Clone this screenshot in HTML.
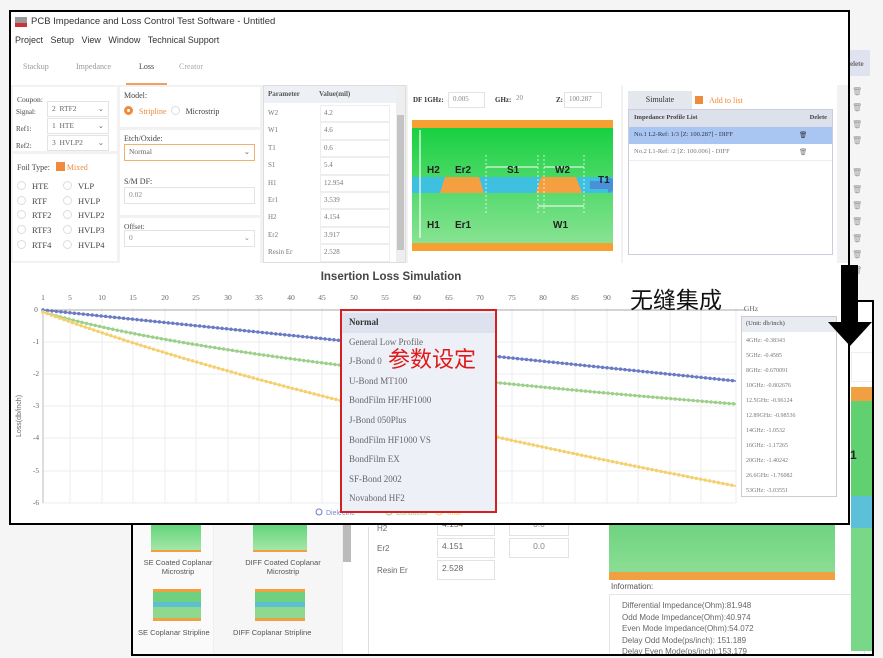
<!DOCTYPE html>
<html><head><meta charset="utf-8"><style>
*{margin:0;padding:0;box-sizing:border-box}
body{width:883px;height:658px;background:#f5f5f5;position:relative;overflow:hidden;font-family:"Liberation Serif",serif;color:#555}
.a{position:absolute}
.s{font-family:"Liberation Sans",sans-serif}
.p{background:#fff}
.in{position:absolute;background:#fff;border:1px solid #e3e3e3;font-size:7.5px;color:#888;padding:2px 4px}
.rad{display:inline-block;width:9px;height:9px;border:1px solid #ddd;border-radius:50%;vertical-align:-1px;margin-right:6px}
.t{font-size:8px;color:#666}
.cell{border:1px solid #eee;padding-left:3px;height:17.4px;line-height:15.4px}
</style></head><body>
<div class="a" style="left:850px;top:50px;width:20px;height:26px;background:#dfe3ef"></div>
<div class="a t" style="left:850px;top:60px;font-size:7px;font-weight:bold">elete</div>
<div class="a" style="left:852px;top:84px;width:10px;font-size:8px;line-height:16.3px;color:#999">🗑<br>🗑<br>🗑<br>🗑<br><br>🗑<br>🗑<br>🗑<br>🗑<br>🗑<br>🗑<br>🗑</div>

<div class="a" style="left:131px;top:300px;width:743px;height:356px;border:2px solid #000;background:#fff;overflow:hidden">
 <div class="a" style="left:0;top:0;width:80px;height:360px;background:#fafafa"></div>
 <div class="a" style="left:80px;top:0;width:130px;height:360px;background:#f6f6f6;border-left:1px solid #eee;border-right:1px solid #eee"></div>
 <div class="a" style="left:210px;top:210px;width:8px;height:50px;background:#bbb"></div>
 <div class="a" style="left:18px;top:215px;width:50px;height:35px;background:linear-gradient(#4fd06a,#a4e6a8);border-bottom:2px solid #f0a040"></div>
 <div class="a" style="left:120px;top:215px;width:54px;height:35px;background:linear-gradient(#4fd06a,#a4e6a8);border-bottom:2px solid #f0a040"></div>
 <div class="a s" style="left:5px;top:256px;width:80px;text-align:center;font-size:7.5px;color:#555">SE Coated Coplanar Microstrip</div>
 <div class="a s" style="left:100px;top:256px;width:100px;text-align:center;font-size:7.5px;color:#555">DIFF Coated Coplanar Microstrip</div>
 <div class="a" style="left:20px;top:287px;width:48px;height:32px;background:linear-gradient(#f0a040 0 3px,#6fd080 3px,#6fd080 13px,#5bc0d0 13px,#5bc0d0 18px,#8ed890 18px,#8ed890 29px,#f0a040 29px)"></div>
 <div class="a" style="left:122px;top:287px;width:50px;height:32px;background:linear-gradient(#f0a040 0 3px,#6fd080 3px,#6fd080 13px,#5bc0d0 13px,#5bc0d0 18px,#8ed890 18px,#8ed890 29px,#f0a040 29px)"></div>
 <div class="a s" style="left:5px;top:326px;font-size:7.5px">SE Coplanar Stripline</div>
 <div class="a s" style="left:100px;top:326px;font-size:7.5px">DIFF Coplanar Stripline</div>
 <div class="a" style="left:235px;top:225px;width:240px;height:135px;border-left:1px solid #ddd"></div>
 <div class="a s" style="left:244px;top:222px;font-size:8px;color:#666">H2</div>
 <div class="a s" style="left:244px;top:242px;font-size:8px;color:#666">Er2</div>
 <div class="a s" style="left:244px;top:264px;font-size:8px;color:#666">Resin Er</div>
 <div class="in s" style="left:304px;top:214px;width:58px;height:20px;font-size:8.5px;color:#666">4.154</div>
 <div class="in s" style="left:304px;top:236px;width:58px;height:20px;font-size:8.5px;color:#666">4.151</div>
 <div class="in s" style="left:304px;top:258px;width:58px;height:20px;font-size:8.5px;color:#666">2.528</div>
 <div class="in s" style="left:376px;top:214px;width:60px;height:20px;font-size:8.5px;color:#888;text-align:center">0.0</div>
 <div class="in s" style="left:376px;top:236px;width:60px;height:20px;font-size:8.5px;color:#888;text-align:center">0.0</div>
 <div class="a" style="left:476px;top:220px;width:226px;height:78px;background:linear-gradient(#6dd37e,#9be3a0)"></div>
 <div class="a" style="left:476px;top:270px;width:226px;height:8px;background:#f0a040"></div>
 <div class="a" style="left:476px;top:278px;width:226px;height:80px;background:#fff"></div>
 <div class="a s" style="left:478px;top:280px;font-size:8px;color:#555">Information:</div>
 <div class="a s" style="left:476px;top:292px;width:256px;height:70px;border:1px solid #e5e5e5;padding:5px 12px;font-size:8px;line-height:11.6px;color:#666">Differential Impedance(Ohm):81.948<br>Odd Mode Impedance(Ohm):40.974<br>Even Mode Impedance(Ohm):54.072<br>Delay Odd Mode(ps/inch): 151.189<br>Delay Even Mode(ps/inch):153.179</div>
 <div class="a" style="left:718px;top:50px;width:30px;height:30px;border:1px solid #eee"></div>
 <div class="a" style="left:718px;top:85px;width:30px;height:14px;background:#f0a040"></div>
 <div class="a" style="left:718px;top:99px;width:30px;height:250px;background:linear-gradient(#60d070 0 95px,#5bc0d8 95px,#5bc0d8 127px,#78d888 127px)"></div>
 <div class="a s" style="left:717px;top:146px;font-size:12px;font-weight:bold;color:#222">1</div>
</div>

<div class="a" style="left:9px;top:10px;width:841px;height:515px;border:2px solid #000;background:#fff;overflow:hidden">
 <div class="a" style="left:4px;top:5px;width:12px;height:10px;background:linear-gradient(#999 60%,#c33 60%)"></div>
 <div class="a s" style="left:20px;top:4px;font-size:9.5px;color:#333">PCB Impedance and Loss Control Test Software - Untitled</div>
 <div class="a s" style="left:4px;top:23px;font-size:9px;color:#333">Project&nbsp;&nbsp; Setup&nbsp;&nbsp; View&nbsp;&nbsp; Window&nbsp;&nbsp; Technical Support</div>
 <div class="a" style="left:12px;top:50px;font-size:8px;color:#999">Stackup</div>
 <div class="a" style="left:65px;top:50px;font-size:8px;color:#999">Impedance</div>
 <div class="a" style="left:128px;top:50px;font-size:8px;color:#444">Loss</div>
 <div class="a" style="left:168px;top:50px;font-size:8px;color:#aaa">Creator</div>
 <div class="a" style="left:115px;top:71px;width:41px;height:2px;background:#f0a060"></div>
 <div class="a" style="left:0;top:73px;width:841px;height:178px;background:#f2f2f2"></div>
 <div class="a p" style="left:2px;top:75px;width:104px;height:64px;font-size:7.5px;color:#444;padding:5px 4px;line-height:16.5px">Coupon:<br></div>
 <div class="a" style="left:5px;top:92px;font-size:7px;color:#444;line-height:17px">Signal:<br>Ref1:<br>Ref2:</div>
 <div class="in" style="left:36px;top:89px;width:62px;height:16px;color:#666">2&nbsp; RTF2 <span style="float:right">⌄</span></div>
 <div class="in" style="left:36px;top:106px;width:62px;height:16px;color:#666">1&nbsp; HTE <span style="float:right">⌄</span></div>
 <div class="in" style="left:36px;top:123px;width:62px;height:16px;color:#666">3&nbsp; HVLP2 <span style="float:right">⌄</span></div>
 <div class="a p" style="left:2px;top:142px;width:104px;height:107px"></div>
 <div class="a" style="left:6px;top:150px;font-size:8px;color:#444">Foil Type: <span style="display:inline-block;width:9px;height:9px;background:#f08a3c;vertical-align:-1px;margin-left:4px"></span> <span style="color:#f08a3c">Mixed</span></div>
 <div class="a" style="left:6px;top:167px;font-size:8.5px;color:#444;line-height:14.7px"><span class="rad"></span>HTE<br><span class="rad"></span>RTF<br><span class="rad"></span>RTF2<br><span class="rad"></span>RTF3<br><span class="rad"></span>RTF4</div>
 <div class="a" style="left:52px;top:167px;font-size:8.5px;color:#444;line-height:14.7px"><span class="rad"></span>VLP<br><span class="rad"></span>HVLP<br><span class="rad"></span>HVLP2<br><span class="rad"></span>HVLP3<br><span class="rad"></span>HVLP4</div>
 <div class="a p" style="left:109px;top:75px;width:140px;height:40px;font-size:8px;color:#444;padding:4px 4px">Model:<div style="margin-top:6px"><span class="rad" style="border:3px solid #f08a3c"></span><span style="color:#f08a3c">Stripline</span>&nbsp; <span class="rad"></span>Microstrip</div></div>
 <div class="a p" style="left:109px;top:118px;width:140px;height:50px;font-size:8px;color:#444;padding:4px 4px">Etch/Oxide:</div>
 <div class="in" style="left:113px;top:132px;width:131px;height:17px;border-color:#f0b070;color:#666">Normal<span style="float:right">⌄</span></div>
 <div class="a p" style="left:109px;top:161px;width:140px;height:42px;font-size:8px;color:#444;padding:4px 4px">S/M DF:</div>
 <div class="in" style="left:113px;top:175px;width:131px;height:17px">0.02</div>
 <div class="a p" style="left:109px;top:206px;width:140px;height:45px;font-size:7.5px;color:#444;padding:4px 4px">Offset:</div>
 <div class="in" style="left:113px;top:218px;width:131px;height:17px">0<span style="float:right">⌄</span></div>
 <div class="a p" style="left:252px;top:73px;width:143px;height:178px;border:1px solid #ddd;overflow:hidden">
  <div class="a" style="left:0;top:0;width:132px;height:17px;background:#edf0f5;font-size:7px;font-weight:bold;color:#555;padding:4px 4px">Parameter<span style="position:absolute;left:55px">Value(mil)</span></div>
  <div class="a" style="left:4px;top:19px;font-size:7px;color:#777;line-height:17.4px">W2<br>W1<br>T1<br>S1<br>H1<br>Er1<br>H2<br>Er2<br>Resin Er</div>
  <div class="a" style="left:56px;top:19px;width:70px;font-size:7px;color:#777">
   <div class="cell">4.2</div><div class="cell">4.6</div><div class="cell">0.6</div><div class="cell">5.4</div><div class="cell">12.954</div><div class="cell">3.539</div><div class="cell">4.154</div><div class="cell">3.917</div><div class="cell">2.528</div></div>
  <div class="a" style="left:132px;top:0;width:9px;height:176px;background:#eee"></div>
  <div class="a" style="left:133px;top:29px;width:7px;height:135px;background:#c4c4c4"></div>
 </div>
 <div class="a p" style="left:397px;top:73px;width:213px;height:178px"></div>
 <div class="a" style="left:402px;top:84px;font-size:7px;font-weight:bold;color:#333">DF 1GHz:</div>
 <div class="in" style="left:437px;top:80px;width:37px;height:16px;font-size:7px">0.005</div>
 <div class="a" style="left:484px;top:84px;font-size:7px;font-weight:bold;color:#333">GHz:</div>
 <div class="in" style="left:501px;top:80px;width:36px;height:16px;font-size:7px;border:none">20</div>
 <div class="a" style="left:545px;top:84px;font-size:7px;font-weight:bold;color:#333">Z:</div>
 <div class="in" style="left:553px;top:80px;width:38px;height:16px;font-size:7px">100.287</div>
 <svg class="a" style="left:401px;top:108px" width="201" height="131">
  <defs><linearGradient id="g" x1="0" y1="0" x2="0" y2="1"><stop offset="0" stop-color="#10cf3c"/><stop offset="1" stop-color="#90e498"/></linearGradient></defs>
  <rect width="201" height="131" fill="url(#g)"/>
  <rect width="201" height="8" fill="#f5a030"/><rect y="123" width="201" height="8" fill="#f5a030"/>
  <rect y="57" width="201" height="16" fill="#3ec0e0"/>
  <polygon points="33,57 67,57 72,73 28,73" fill="#f5a040"/>
  <polygon points="129,57 164,57 170,73 124,73" fill="#f5a040"/>
  <polygon points="178,61 196,61 196,57 213,65 196,73 196,69 178,69" fill="#4a90d8"/>
  <line x1="8" y1="10" x2="8" y2="118" stroke="#fff" stroke-width="1.2"/>
  <g stroke="#fff" stroke-dasharray="2 2" stroke-width=".7"><line x1="74" y1="35" x2="74" y2="95"/><line x1="126" y1="35" x2="126" y2="95"/><line x1="132" y1="35" x2="132" y2="95"/><line x1="172" y1="35" x2="172" y2="95"/></g>
  <g stroke="#fff" stroke-width="1"><line x1="74" y1="47" x2="126" y2="47"/><line x1="132" y1="47" x2="172" y2="47"/><line x1="126" y1="86" x2="172" y2="86"/></g>
  <g font-family="Liberation Sans" font-weight="bold" font-size="10" fill="#222"><text x="15" y="53">H2</text><text x="43" y="53">Er2</text><text x="95" y="53">S1</text><text x="143" y="53">W2</text><text x="186" y="63">T1</text><text x="15" y="108">H1</text><text x="43" y="108">Er1</text><text x="141" y="108">W1</text></g>
 </svg>
 <div class="a p" style="left:612px;top:73px;width:214px;height:178px"></div>
 <div class="a" style="left:617px;top:79px;width:64px;height:18px;background:#e5e7ee;font-size:8px;color:#333;text-align:center;line-height:18px">Simulate</div>
 <div class="a" style="left:684px;top:84px;font-size:8px;color:#f08a3c"><span style="display:inline-block;width:8px;height:8px;background:#f08a3c;vertical-align:-1px;margin-right:6px"></span>Add to list</div>
 <div class="a" style="left:617px;top:97px;width:205px;height:146px;border:1px solid #ccd;background:#fff"></div>
 <div class="a" style="left:618px;top:98px;width:203px;height:17px;background:#dde1ec;font-size:6.5px;font-weight:bold;color:#444;padding:4px 5px">Impedance Profile List<span style="float:right">Delete</span></div>
 <div class="a" style="left:618px;top:115px;width:203px;height:17px;background:#a9c6f2;font-size:6.5px;color:#334;padding:4px 5px">No.1 L2-Ref: 1/3 [Z: 100.287] - DIFF<span style="position:absolute;left:170px">🗑</span></div>
 <div class="a" style="left:618px;top:132px;width:203px;height:17px;font-size:6.5px;color:#777;padding:4px 5px;border-bottom:1px solid #eee">No.2 L1-Ref: /2 [Z: 100.006] - DIFF<span style="position:absolute;left:170px">🗑</span></div>
 <div class="a s" style="left:0;top:259px;width:760px;text-align:center;font-size:11.5px;font-weight:bold;color:#444">Insertion Loss Simulation</div>
 <svg class="a" style="left:0;top:275px" width="841" height="240">
  <g stroke="#eee" stroke-width="1">
   <line x1="32" y1="23" x2="725" y2="23"/><line x1="32" y1="55" x2="725" y2="55"/><line x1="32" y1="87" x2="725" y2="87"/><line x1="32" y1="119" x2="725" y2="119"/><line x1="32" y1="151" x2="725" y2="151"/><line x1="32" y1="184" x2="725" y2="184"/><line x1="32" y1="216" x2="725" y2="216"/>
   <line x1="59" y1="21" x2="59" y2="216"/><line x1="91" y1="21" x2="91" y2="216"/><line x1="122" y1="21" x2="122" y2="216"/><line x1="154" y1="21" x2="154" y2="216"/><line x1="185" y1="21" x2="185" y2="216"/><line x1="217" y1="21" x2="217" y2="216"/><line x1="248" y1="21" x2="248" y2="216"/><line x1="280" y1="21" x2="280" y2="216"/><line x1="311" y1="21" x2="311" y2="216"/><line x1="343" y1="21" x2="343" y2="216"/><line x1="374" y1="21" x2="374" y2="216"/><line x1="406" y1="21" x2="406" y2="216"/><line x1="438" y1="21" x2="438" y2="216"/><line x1="469" y1="21" x2="469" y2="216"/><line x1="501" y1="21" x2="501" y2="216"/><line x1="532" y1="21" x2="532" y2="216"/><line x1="564" y1="21" x2="564" y2="216"/><line x1="596" y1="21" x2="596" y2="216"/><line x1="627" y1="21" x2="627" y2="216"/><line x1="659" y1="21" x2="659" y2="216"/><line x1="690" y1="21" x2="690" y2="216"/><line x1="725" y1="21" x2="725" y2="216"/>
  </g>
  <line x1="32" y1="23" x2="735" y2="23" stroke="#aaa"/><line x1="32" y1="21" x2="32" y2="216" stroke="#bbb"/>
  <g font-family="Liberation Serif" font-size="7.5" fill="#666" text-anchor="middle">
   <text x="32" y="13">1</text><text x="59" y="13">5</text><text x="91" y="13">10</text><text x="122" y="13">15</text><text x="154" y="13">20</text><text x="185" y="13">25</text><text x="217" y="13">30</text><text x="248" y="13">35</text><text x="280" y="13">40</text><text x="311" y="13">45</text><text x="343" y="13">50</text><text x="374" y="13">55</text><text x="406" y="13">60</text><text x="438" y="13">65</text><text x="469" y="13">70</text><text x="501" y="13">75</text><text x="532" y="13">80</text><text x="564" y="13">85</text><text x="596" y="13">90</text><text x="740" y="24">GHz</text>
   <text x="25" y="25">0</text><text x="25" y="57">-1</text><text x="25" y="89">-2</text><text x="25" y="121">-3</text><text x="25" y="153">-4</text><text x="25" y="186">-5</text><text x="25" y="218">-6</text>
  </g>
  <text transform="translate(10,150) rotate(-90)" font-family="Liberation Sans" font-size="7" fill="#666">Loss(db/inch)</text>
  <path d="M32 23 L725 94" stroke="#6a7bc4" stroke-width="1.5" fill="none"/>
  <path d="M32 23 L725 94" stroke="#6a7bc4" stroke-width="3.5" stroke-linecap="round" stroke-dasharray="0 4.5" fill="none"/>
  <path d="M32 25 Q200 75 725 117" stroke="#9cd08a" stroke-width="1.5" fill="none"/>
  <path d="M32 25 Q200 75 725 117" stroke="#9cd08a" stroke-width="3.5" stroke-linecap="round" stroke-dasharray="0 4.5" fill="none"/>
  <path d="M32 25 Q260 110 725 199" stroke="#f5d070" stroke-width="1.5" fill="none"/>
  <path d="M32 25 Q260 110 725 199" stroke="#f5d070" stroke-width="3.5" stroke-linecap="round" stroke-dasharray="0 4.5" fill="none"/>
  <g font-family="Liberation Sans" font-size="7" fill="#7a8acb"><circle cx="308" cy="225" r="3" fill="none" stroke="#6a7bc4"/><text x="315" y="228">Dielectric</text><circle cx="378" cy="225" r="3" fill="none" stroke="#9cd08a"/><text x="385" y="228" fill="#9cd08a">Conductor</text><circle cx="428" cy="225" r="3" fill="none" stroke="#f5d070"/><text x="435" y="228" fill="#f5d070">Total</text></g>
 </svg>
 <div class="a" style="left:329px;top:297px;width:157px;height:204px;border:2px solid #d42020;background:#eef0f8;font-size:9px;color:#666;line-height:19.6px">
  <div style="background:#dde2ee;font-weight:bold;color:#333;padding-left:7px;margin-top:2px">Normal</div>
  <div style="padding-left:7px">General Low Profile<br>J-Bond 0<br>U-Bond MT100<br>BondFilm HF/HF1000<br>J-Bond 050Plus<br>BondFilm HF1000 VS<br>BondFilm EX<br>SF-Bond 2002<br>Novabond HF2</div>
 </div>
 <div class="a" style="left:377px;top:335px;font-family:'Noto Sans CJK SC',sans-serif;font-size:22px;color:#e01818;line-height:1">参数设定</div>
 <div class="a" style="left:730px;top:304px;width:96px;height:181px;border:1px solid #ccc;background:#fff;font-size:6px;color:#777"></div>
 <div class="a" style="left:731px;top:305px;width:94px;height:15px;background:#e8ebf2;font-size:6.5px;color:#444;padding:3px 4px">(Unit: db/inch)</div>
 <div class="a" style="left:735px;top:322px;font-size:6px;color:#777;line-height:15px">4GHz: -0.38343<br>5GHz: -0.4585<br>8GHz: -0.670091<br>10GHz: -0.802676<br>12.5GHz: -0.96124<br>12.89GHz: -0.98536<br>14GHz: -1.0532<br>16GHz: -1.17265<br>20GHz: -1.40242<br>26.6GHz: -1.76082<br>53GHz: -3.03551</div>
</div>

<div class="a" style="left:630px;top:287px;font-family:'Noto Sans CJK SC',sans-serif;font-size:23px;color:#111;line-height:1">无缝集成</div>
<div class="a" style="left:841px;top:265px;width:17px;height:58px;background:#000"></div>
<div class="a" style="left:828px;top:322px;width:0;height:0;border-left:22px solid transparent;border-right:22px solid transparent;border-top:24px solid #000"></div>
</body></html>
